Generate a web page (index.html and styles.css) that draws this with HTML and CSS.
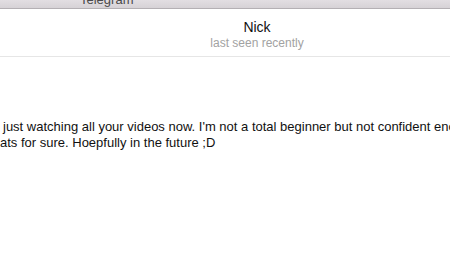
FILE: index.html
```html
<!DOCTYPE html>
<html lang="en">
<head>
    <meta charset="UTF-8">
    <meta name="viewport" content="width=device-width, initial-scale=1.0">
    <title>Telegram</title>
    <link rel="stylesheet" href="styles.css">
</head>
<body>
    <div class="titlebar">
        <span class="app-title">Telegram</span>
    </div>
    <div class="chat-header">
        <div class="peer-name">Nick</div>
        <div class="peer-status">last seen recently</div>
    </div>
    <div class="messages">
        <div class="message-text">
            <div class="line first">just watching all your videos now. I'm not a total beginner but not confident enough</div>
            <div class="line second">ats for sure. Hoepfully in the future ;D</div>
        </div>
    </div>
</body>
</html>
```

FILE: styles.css
```css
body {
    font-family: "Liberation Sans", Arial, sans-serif;
    background: #fff;
    margin: 0;
    padding: 0;
    height: 260px;
    overflow: hidden;
}

.titlebar {
    height: 8px;
    background: linear-gradient(#e2dee2, #d6d2d6);
    border-bottom: 1px solid #b4b0b4;
    display: flex;
    align-items: flex-end;
    padding-left: 80px;
    overflow: hidden;
}

.app-title {
    font-size: 13px;
    line-height: 16px;
    color: #4a4a4a;
    flex-shrink: 0;
}

.chat-header {
    text-align: center;
    padding: 10px 0 6px 64px;
    border-bottom: 1px solid #e6e6e6;
}

.peer-name {
    font-size: 14px;
    line-height: 17px;
    color: #111;
}

.peer-status {
    font-size: 12px;
    line-height: 14px;
    color: #a2a2a2;
}

.messages {
    padding-top: 62px;
    overflow: hidden;
}

.message-text {
    font-size: 13px;
    line-height: 16px;
    color: #111;
    white-space: nowrap;
}

.first {
    margin-left: 3px;
}

.second {
    margin-left: 0;
}
```
